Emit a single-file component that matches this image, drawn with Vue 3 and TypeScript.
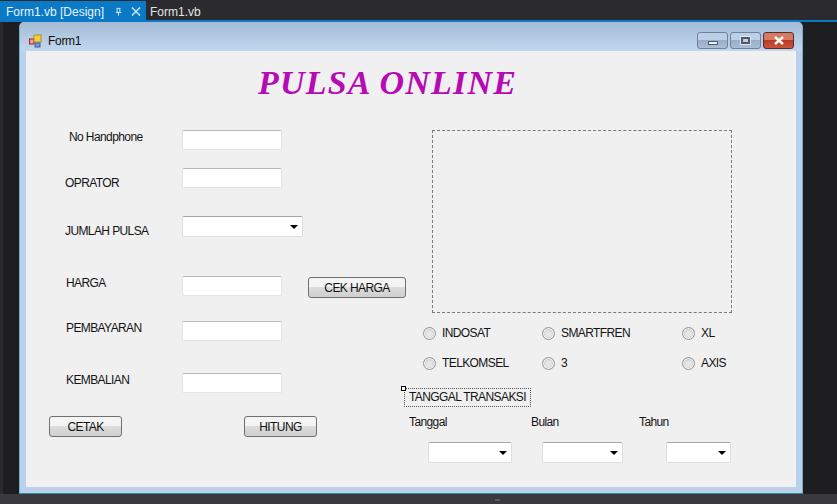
<script setup lang="ts">
interface Box { x: number; y: number; w: number; h: number }
interface Label { text: string; x: number; y: number }
const ORIGIN_X = 26
const ORIGIN_Y = 51
const place = (x: number, y: number, w?: number, h?: number) => ({
  left: `${x - ORIGIN_X}px`,
  top: `${y - ORIGIN_Y}px`,
  ...(w ? { width: `${w}px` } : {}),
  ...(h ? { height: `${h}px` } : {}),
})
const labels: Label[] = [
  { text: 'No Handphone', x: 69, y: 130 },
  { text: 'OPRATOR', x: 65, y: 176 },
  { text: 'JUMLAH PULSA', x: 65, y: 224 },
  { text: 'HARGA', x: 66, y: 276 },
  { text: 'PEMBAYARAN', x: 66, y: 321 },
  { text: 'KEMBALIAN', x: 66, y: 373 },
  { text: 'Tanggal', x: 409, y: 415 },
  { text: 'Bulan', x: 531, y: 415 },
  { text: 'Tahun', x: 639, y: 415 },
]
const inputs: Box[] = [
  { x: 182, y: 130, w: 100, h: 20 },
  { x: 182, y: 168, w: 100, h: 20 },
  { x: 182, y: 276, w: 100, h: 20 },
  { x: 182, y: 321, w: 100, h: 20 },
  { x: 182, y: 373, w: 100, h: 20 },
]
const combos: Box[] = [
  { x: 182, y: 216, w: 121, h: 21 },
  { x: 428, y: 442, w: 84, h: 21 },
  { x: 542, y: 442, w: 81, h: 21 },
  { x: 666, y: 442, w: 65, h: 21 },
]
const buttons = [
  { text: 'CEK HARGA', x: 308, y: 277, w: 98, h: 21 },
  { text: 'CETAK', x: 49, y: 416, w: 73, h: 21 },
  { text: 'HITUNG', x: 244, y: 416, w: 73, h: 21 },
]
const radios: Label[] = [
  { text: 'INDOSAT', x: 423, y: 326 },
  { text: 'SMARTFREN', x: 542, y: 326 },
  { text: 'XL', x: 682, y: 326 },
  { text: 'TELKOMSEL', x: 423, y: 356 },
  { text: '3', x: 542, y: 356 },
  { text: 'AXIS', x: 682, y: 356 },
]
</script>

<template>
  <div class="ide">
    <div class="tabs">
      <div class="tab active">
        <span>Form1.vb [Design]</span>
        <svg class="pin" width="10" height="10" viewBox="0 0 10 10">
          <path d="M3 1h4M3.5 1v4.5M6.5 1v4.5M2 5.5h6M5 5.5V9" fill="none" stroke="#e8f2fa" stroke-width="1" />
        </svg>
        <svg class="close" width="11" height="11" viewBox="0 0 11 11">
          <path d="M1 1l9 9M10 1l-9 9" fill="none" stroke="#cfe6f6" stroke-width="1.6" />
        </svg>
      </div>
      <div class="tab">Form1.vb</div>
    </div>
    <div class="accent"></div>
    <div class="stage">
      <div class="window">
        <div class="titlebar">
          <svg class="app-icon" width="14" height="14" viewBox="0 0 14 14">
            <rect x="0.5" y="5" width="4.5" height="5" fill="#e8a0a0" stroke="#a82020" />
            <rect x="5" y="1" width="7" height="7" fill="#f5d040" stroke="#b08a20" />
            <rect x="6" y="9" width="5" height="4" fill="#7898d8" stroke="#4060a8" />
          </svg>
          <span class="title">Form1</span>
          <div class="controls">
            <div class="ctl">
              <i class="min"></i>
            </div>
            <div class="ctl">
              <i class="max"></i>
            </div>
            <div class="ctl red">
              <svg width="12" height="9" viewBox="0 0 12 9">
                <path d="M2 1l8 7M10 1l-8 7" fill="none" stroke="#fff" stroke-width="2.4" />
              </svg>
            </div>
          </div>
        </div>
        <div class="client">
          <div class="heading" :style="place(258, 64)">PULSA ONLINE</div>
          <div v-for="l in labels" :key="l.text" class="label" :style="place(l.x, l.y)">{{ l.text }}</div>
          <div
            v-for="(b, i) in inputs"
            :key="'input' + i"
            class="input"
            :style="place(b.x, b.y, b.w, b.h)"
          ></div>
          <div
            v-for="(b, i) in combos"
            :key="'combo' + i"
            class="input combo"
            :style="place(b.x, b.y, b.w, b.h)"
          >
            <i class="arrow"></i>
          </div>
          <div
            v-for="b in buttons"
            :key="b.text"
            class="button"
            :style="place(b.x, b.y, b.w, b.h)"
          >{{ b.text }}</div>
          <div class="picture" :style="place(432, 130, 300, 183)"></div>
          <div v-for="r in radios" :key="r.text" class="radio" :style="place(r.x, r.y)">
            <i class="dot"></i>
            <span>{{ r.text }}</span>
          </div>
          <div class="selected" :style="place(404, 388, 127, 19)">TANGGAL TRANSAKSI</div>
          <i class="handle" :style="place(401, 386)"></i>
        </div>
      </div>
    </div>
    <div class="statusbar"><i class="grip"></i></div>
  </div>
</template>

<style>
html, body { margin: 0; padding: 0; background: #1e1e20; }
</style>

<style scoped>
.ide {
  width: 837px;
  height: 504px;
  overflow: hidden;
  background: #1e1e20;
  display: flex;
  flex-direction: column;
  font-family: "Liberation Sans", Arial, sans-serif;
}
.tabs {
  height: 20px;
  flex: none;
  display: flex;
  background: #2a2a2f;
  padding-top: 1px;
  box-sizing: border-box;
}
.tab {
  height: 19px;
  padding: 2px 5px 0 4px;
  display: flex;
  align-items: center;
  color: #e4e4e6;
  font-size: 12px;
  white-space: nowrap;
  box-sizing: border-box;
}
.tab.active {
  width: 146px;
  padding-left: 6px;
  background: #0b7ac6;
  color: #e8f2fa;
}
.pin { margin-left: 10px; }
.close { margin-left: 8px; }
.accent {
  height: 2px;
  flex: none;
  background: #0b7ac6;
}
.stage {
  flex: 1;
  min-height: 0;
  padding-left: 16px;
  border-left: 3px solid #2a2a2f;
}
.window {
  width: 784px;
  height: 472px;
  box-sizing: border-box;
  border-radius: 5px 5px 0 0;
  border: 1px solid #6fb1cf;
  border-top: 0;
  border-bottom-color: #2b8d9c;
  background: #b9d1ea;
  display: flex;
  flex-direction: column;
}
.titlebar {
  height: 29px;
  flex: none;
  display: flex;
  align-items: center;
  padding: 8px 8px 0 9px;
  box-sizing: border-box;
  border-radius: 5px 5px 0 0;
  background: linear-gradient(to bottom, #a3bbd7, #c3d8ee);
}
.title {
  margin-left: 5px;
  font-size: 12px;
  letter-spacing: -0.3px;
  color: #111;
}
.controls {
  margin-left: auto;
  display: flex;
  gap: 2px;
}
.ctl {
  width: 29px;
  height: 15px;
  border: 1px solid #6f819b;
  border-radius: 3px;
  background: linear-gradient(to bottom, #bccfe5 0 45%, #9aaec9 50%, #a9bdd6 100%);
  display: flex;
  align-items: center;
  justify-content: center;
}
.ctl.red {
  border-color: #5a2c2c;
  background: linear-gradient(to bottom, #d67a64 0 45%, #b83c26 50%, #c9543c 100%);
}
.min {
  width: 8px;
  height: 2px;
  margin-top: 5px;
  background: #eef2f7;
  border: 1px solid #4d5a6c;
}
.max {
  width: 5px;
  height: 3px;
  background: #c4cdd8;
  border: 2px solid #4d5a6c;
  box-shadow: 0 0 0 1px #dfe7f0;
}
.client {
  position: relative;
  width: 770px;
  height: 436px;
  margin-left: 6px;
  background: #f0f0f0;
}
.heading {
  position: absolute;
  white-space: nowrap;
  font-family: "Liberation Serif", serif;
  font-style: italic;
  font-weight: 700;
  font-size: 34px;
  line-height: 38px;
  letter-spacing: 1.2px;
  color: #b60ab4;
}
.label {
  position: absolute;
  white-space: nowrap;
  font-size: 12px;
  letter-spacing: -0.6px;
  line-height: 14px;
  color: #141414;
}
.input {
  position: absolute;
  box-sizing: border-box;
  background: #fff;
  border: 1px solid #e3e3e3;
  border-top-color: #b8b8b8;
  border-radius: 2px;
}
.combo {
  border-color: #dedede;
  border-top-color: #a6a6a6;
}
.arrow {
  position: absolute;
  right: 4px;
  top: 8px;
  width: 0;
  height: 0;
  border-left: 4px solid transparent;
  border-right: 4px solid transparent;
  border-top: 4px solid #000;
}
.button {
  position: absolute;
  box-sizing: border-box;
  border: 1px solid #707070;
  border-radius: 3px;
  background: linear-gradient(to bottom, #f4f4f4 0 45%, #dcdcdc 50%, #cfcfcf 100%);
  font-size: 12px;
  letter-spacing: -0.6px;
  color: #111;
  display: flex;
  align-items: center;
  justify-content: center;
}
.picture {
  position: absolute;
  box-sizing: border-box;
  border: 1px dashed #7a7a7a;
}
.radio {
  position: absolute;
  display: flex;
  align-items: center;
  gap: 6px;
  font-size: 12px;
  letter-spacing: -0.6px;
  line-height: 14px;
  color: #141414;
  white-space: nowrap;
}
.dot {
  width: 13px;
  height: 13px;
  box-sizing: border-box;
  border-radius: 50%;
  border: 1px solid #959595;
  background: radial-gradient(circle at 50% 55%, #e6e6e6 0 30%, #c8c8c8 70%);
  box-shadow: inset 0 0 0 1px #f4f4f4;
}
.selected {
  position: absolute;
  box-sizing: border-box;
  border: 1px dotted #555;
  font-size: 12px;
  letter-spacing: -0.6px;
  line-height: 17px;
  padding-left: 4px;
  color: #141414;
  white-space: nowrap;
}
.handle {
  position: absolute;
  width: 5px;
  height: 5px;
  box-sizing: border-box;
  border: 1px solid #000;
  background: #fff;
}
.statusbar {
  height: 10px;
  flex: none;
  background: #39393f;
  padding: 5px 0 0 495px;
  box-sizing: border-box;
}
.grip {
  display: block;
  width: 5px;
  height: 2px;
  background: #5a5a60;
}
</style>
